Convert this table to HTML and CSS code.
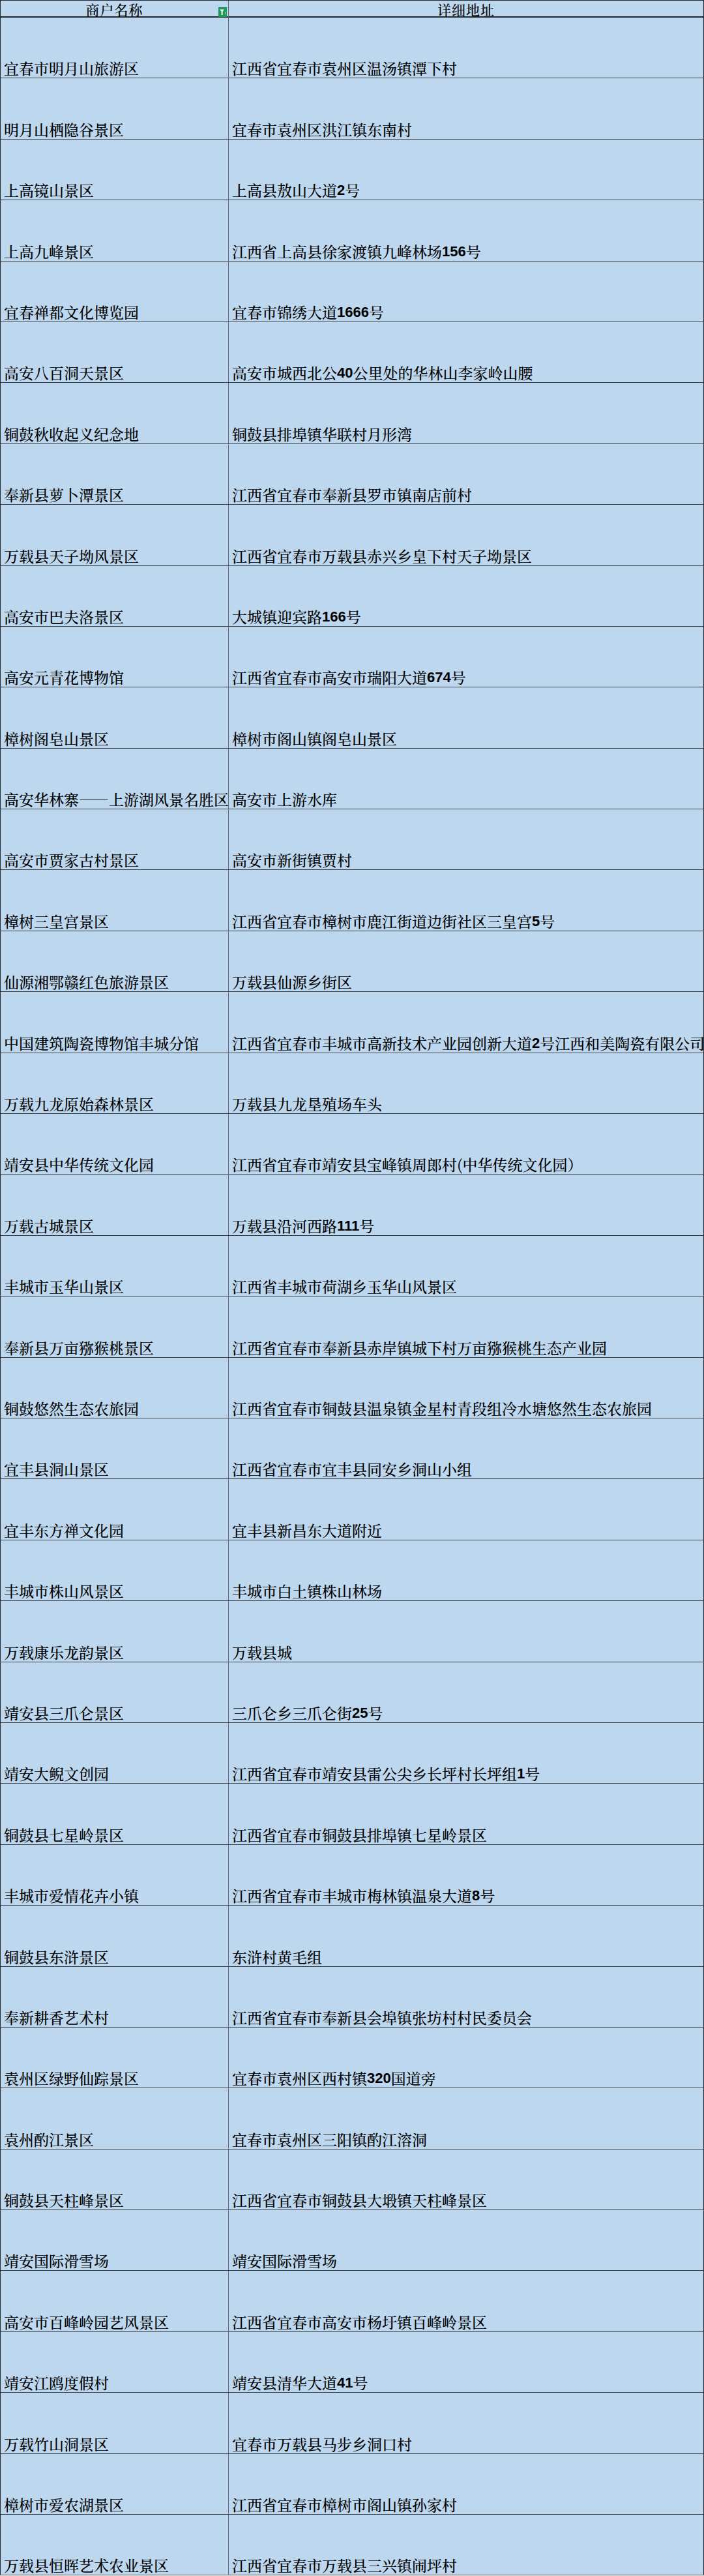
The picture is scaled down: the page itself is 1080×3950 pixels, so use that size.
FILE: index.html
```html
<!DOCTYPE html>
<html lang="zh-CN">
<head>
<meta charset="utf-8">
<title>商户名称 - 详细地址</title>
<link rel="stylesheet" href="styles.css">
</head>
<body>
<div class="sheet">
  <div class="cell head first">商户名称
    <svg class="filter" width="13" height="15" viewBox="0 0 13 15"><rect width="13" height="15" fill="#1b9a58"/><path d="M2 3.5h7.2l-2.6 3v5.5h-2v-5.5z" fill="#fff"/><rect x="10" y="7" width="1.4" height="1.2" fill="#fff"/><rect x="10" y="9.5" width="1.4" height="1.2" fill="#fff"/></svg>
  </div>
  <div class="cell head">详细地址</div>

  <div class="cell first">宜春市明月山旅游区</div><div class="cell">江西省宜春市袁州区温汤镇潭下村</div>
  <div class="cell first">明月山栖隐谷景区</div><div class="cell">宜春市袁州区洪江镇东南村</div>
  <div class="cell first">上高镜山景区</div><div class="cell">上高县敖山大道<span class="n">2</span>号</div>
  <div class="cell first">上高九峰景区</div><div class="cell">江西省上高县徐家渡镇九峰林场<span class="n">156</span>号</div>
  <div class="cell first">宜春禅都文化博览园</div><div class="cell">宜春市锦绣大道<span class="n">1666</span>号</div>
  <div class="cell first">高安八百洞天景区</div><div class="cell">高安市城西北公<span class="n">40</span>公里处的华林山李家岭山腰</div>
  <div class="cell first">铜鼓秋收起义纪念地</div><div class="cell">铜鼓县排埠镇华联村月形湾</div>
  <div class="cell first">奉新县萝卜潭景区</div><div class="cell">江西省宜春市奉新县罗市镇南店前村</div>
  <div class="cell first">万载县天子坳风景区</div><div class="cell">江西省宜春市万载县赤兴乡皇下村天子坳景区</div>
  <div class="cell first">高安市巴夫洛景区</div><div class="cell">大城镇迎宾路<span class="n">166</span>号</div>
  <div class="cell first">高安元青花博物馆</div><div class="cell">江西省宜春市高安市瑞阳大道<span class="n">674</span>号</div>
  <div class="cell first">樟树阁皂山景区</div><div class="cell">樟树市阁山镇阁皂山景区</div>
  <div class="cell first">高安华林寨——上游湖风景名胜区</div><div class="cell">高安市上游水库</div>
  <div class="cell first">高安市贾家古村景区</div><div class="cell">高安市新街镇贾村</div>
  <div class="cell first">樟树三皇宫景区</div><div class="cell">江西省宜春市樟树市鹿江街道边街社区三皇宫<span class="n">5</span>号</div>
  <div class="cell first">仙源湘鄂赣红色旅游景区</div><div class="cell">万载县仙源乡街区</div>
  <div class="cell first">中国建筑陶瓷博物馆丰城分馆</div><div class="cell">江西省宜春市丰城市高新技术产业园创新大道<span class="n">2</span>号江西和美陶瓷有限公司</div>
  <div class="cell first">万载九龙原始森林景区</div><div class="cell">万载县九龙垦殖场车头</div>
  <div class="cell first">靖安县中华传统文化园</div><div class="cell">江西省宜春市靖安县宝峰镇周郎村(中华传统文化园）</div>
  <div class="cell first">万载古城景区</div><div class="cell">万载县沿河西路<span class="n">111</span>号</div>
  <div class="cell first">丰城市玉华山景区</div><div class="cell">江西省丰城市荷湖乡玉华山风景区</div>
  <div class="cell first">奉新县万亩猕猴桃景区</div><div class="cell">江西省宜春市奉新县赤岸镇城下村万亩猕猴桃生态产业园</div>
  <div class="cell first">铜鼓悠然生态农旅园</div><div class="cell">江西省宜春市铜鼓县温泉镇金星村青段组冷水塘悠然生态农旅园</div>
  <div class="cell first">宜丰县洞山景区</div><div class="cell">江西省宜春市宜丰县同安乡洞山小组</div>
  <div class="cell first">宜丰东方禅文化园</div><div class="cell">宜丰县新昌东大道附近</div>
  <div class="cell first">丰城市株山风景区</div><div class="cell">丰城市白土镇株山林场</div>
  <div class="cell first">万载康乐龙韵景区</div><div class="cell">万载县城</div>
  <div class="cell first">靖安县三爪仑景区</div><div class="cell">三爪仑乡三爪仑街<span class="n">25</span>号</div>
  <div class="cell first">靖安大鲵文创园</div><div class="cell">江西省宜春市靖安县雷公尖乡长坪村长坪组<span class="n">1</span>号</div>
  <div class="cell first">铜鼓县七星岭景区</div><div class="cell">江西省宜春市铜鼓县排埠镇七星岭景区</div>
  <div class="cell first">丰城市爱情花卉小镇</div><div class="cell">江西省宜春市丰城市梅林镇温泉大道<span class="n">8</span>号</div>
  <div class="cell first">铜鼓县东浒景区</div><div class="cell">东浒村黄毛组</div>
  <div class="cell first">奉新耕香艺术村</div><div class="cell">江西省宜春市奉新县会埠镇张坊村村民委员会</div>
  <div class="cell first">袁州区绿野仙踪景区</div><div class="cell">宜春市袁州区西村镇<span class="n">320</span>国道旁</div>
  <div class="cell first">袁州酌江景区</div><div class="cell">宜春市袁州区三阳镇酌江溶洞</div>
  <div class="cell first">铜鼓县天柱峰景区</div><div class="cell">江西省宜春市铜鼓县大塅镇天柱峰景区</div>
  <div class="cell first">靖安国际滑雪场</div><div class="cell">靖安国际滑雪场</div>
  <div class="cell first">高安市百峰岭园艺风景区</div><div class="cell">江西省宜春市高安市杨圩镇百峰岭景区</div>
  <div class="cell first">靖安江鸥度假村</div><div class="cell">靖安县清华大道<span class="n">41</span>号</div>
  <div class="cell first">万载竹山洞景区</div><div class="cell">宜春市万载县马步乡洞口村</div>
  <div class="cell first">樟树市爱农湖景区</div><div class="cell">江西省宜春市樟树市阁山镇孙家村</div>
  <div class="cell first">万载县恒晖艺术农业景区</div><div class="cell">江西省宜春市万载县三兴镇闹坪村</div>
</div>
</body>
</html>
```

FILE: styles.css
```css
html, body {
  margin: 0;
  padding: 0;
  background: #ffffff;
}

.sheet {
  display: grid;
  grid-template-columns: 350px 729px;
  grid-template-rows: 26px repeat(42, 93.4px);
  width: 1080px;
  box-sizing: border-box;
  border-top: 1px solid #23272b;
  border-left: 1px solid #23272b;
  background: #bdd7ee;
  font-family: "Noto Serif CJK SC", "Noto Sans CJK SC", serif;
  font-size: 23px;
  font-weight: 500;
  color: #000;
}

.cell {
  position: relative;
  box-sizing: border-box;
  display: flex;
  align-items: flex-end;
  padding: 0 0 1px 5px;
  line-height: 26px;
  white-space: nowrap;
  overflow: hidden;
  border-right: 1px solid #23272b;
  border-bottom: 1px solid #3c4148;
}

.cell.first {
  border-right: 1px solid #676d75;
}

.head {
  justify-content: center;
  padding: 0;
  font-size: 21px;
  letter-spacing: 1px;
  line-height: 21px;
  border-bottom: 2px solid #23272b;
  overflow: visible;
}

.head.first {
  border-right: 1px solid #676d75;
}

.filter {
  position: absolute;
  right: 2px;
  bottom: -1px;
  display: block;
}

.n {
  font-family: "Liberation Sans", sans-serif;
  font-weight: bold;
  font-size: 22px;
}
```
